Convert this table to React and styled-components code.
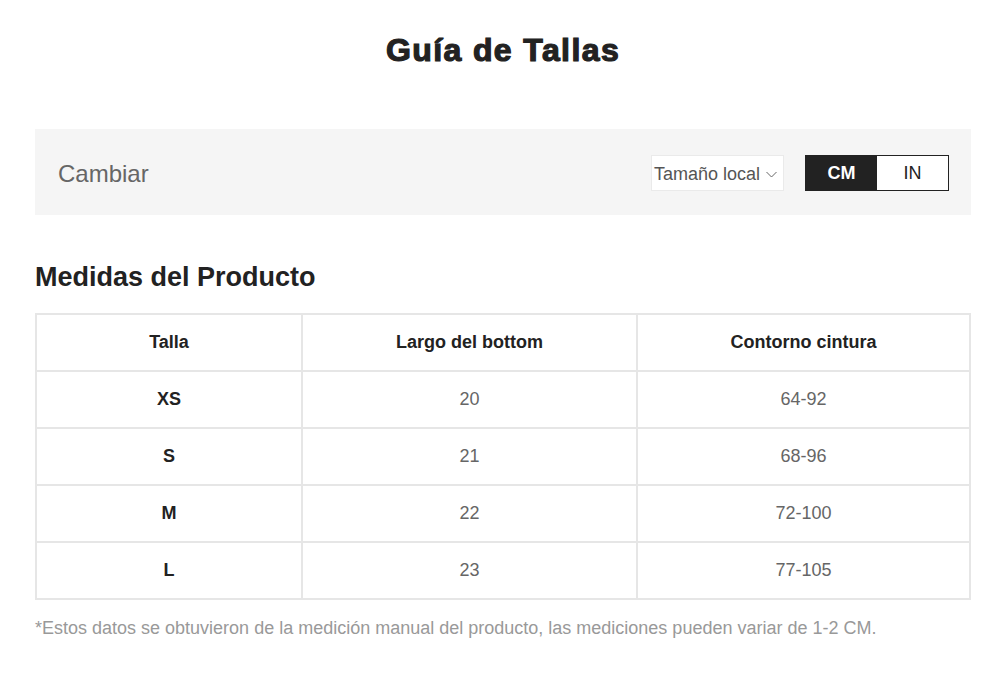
import React, { useState } from 'react';
import styled, { createGlobalStyle } from 'styled-components';

const GlobalStyle = createGlobalStyle`
    body {
        margin: 0;
        background: #fff;
        font-family: "Liberation Sans", Arial, sans-serif;
    }
`

const Page = styled.div`
    width: 936px;
    margin: 0 auto;
    padding-top: 32px;
`

const Title = styled.h1`
    margin: 0;
    text-align: center;
    font-size: 32px;
    font-weight: 700;
    color: #222;
    line-height: 36px;
    -webkit-text-stroke: 1.2px #222;
    letter-spacing: 1.4px;
`

const Toolbar = styled.div`
    margin-top: 61px;
    height: 86px;
    background: #f5f5f5;
    display: flex;
    align-items: center;
    padding: 0 22px 0 23px;
`

const Label = styled.span`
    flex: 1;
    font-size: 24px;
    color: #666;
    padding-top: 3px;
`

const Select = styled.div`
    height: 36px;
    box-sizing: border-box;
    width: 133px;
    background: #fff;
    border: 1px solid #eaeaea;
    display: flex;
    align-items: center;
    gap: 6px;
    padding: 3px 0 0 2px;
    font-size: 18px;
    color: #555;
    margin: 1px 21px 0 0;
`

const Toggle = styled.div`
    display: flex;
    border: 1px solid #222;
    height: 36px;
    box-sizing: border-box;
    margin-top: 1px;
`

const ToggleButton = styled.button`
    width: ${p => p.$w}px;
    border: none;
    margin: 0;
    padding: 2px 0 0;
    font-family: inherit;
    font-size: 18px;
    font-weight: ${p => p.$active ? 700 : 400};
    background: ${p => p.$active ? '#222' : '#fff'};
    color: ${p => p.$active ? '#fff' : '#222'};
    cursor: pointer;
`

const Heading = styled.h2`
    margin: 46px 0 0;
    font-size: 27px;
    font-weight: 700;
    color: #222;
    line-height: 32px;
`

const Table = styled.table`
    margin-top: 20px;
    width: 100%;
    border-collapse: collapse;
    border: 2px solid #e6e6e6;
`

const Cell = styled.td`
    border: 2px solid #e6e6e6;
    height: 55px;
    padding: 0;
    text-align: center;
    font-size: 18px;
    font-weight: ${p => p.$bold ? 700 : 400};
    color: ${p => p.$bold ? '#222' : '#666'};
`

const Note = styled.p`
    margin: 18px 0 0;
    font-size: 18px;
    color: #999;
`

const rows = [
    ['XS', '20', '64-92'],
    ['S', '21', '68-96'],
    ['M', '22', '72-100'],
    ['L', '23', '77-105'],
];

export default function App() {
    const [unit, setUnit] = useState('CM');

    return (
        <>
            <GlobalStyle />
            <Page>
                <Title>Guía de Tallas</Title>
                <Toolbar>
                    <Label>Cambiar</Label>
                    <Select>
                        Tamaño local
                        <svg width="11" height="7" viewBox="0 0 11 7" fill="none">
                            <path d="M0.5 1 L5.5 6 L10.5 1" stroke="#666" strokeWidth="1" />
                        </svg>
                    </Select>
                    <Toggle>
                        <ToggleButton $w={71} $active={unit === 'CM'} onClick={() => setUnit('CM')}>CM</ToggleButton>
                        <ToggleButton $w={71} $active={unit === 'IN'} onClick={() => setUnit('IN')}>IN</ToggleButton>
                    </Toggle>
                </Toolbar>
                <Heading>Medidas del Producto</Heading>
                <Table>
                    <colgroup>
                        <col style={{ width: '266px' }} />
                        <col style={{ width: '335px' }} />
                        <col />
                    </colgroup>
                    <tbody>
                        <tr>
                            <Cell $bold>Talla</Cell>
                            <Cell $bold>Largo del bottom</Cell>
                            <Cell $bold>Contorno cintura</Cell>
                        </tr>
                        {rows.map(r => (
                            <tr key={r[0]}>
                                <Cell $bold>{r[0]}</Cell>
                                <Cell>{r[1]}</Cell>
                                <Cell>{r[2]}</Cell>
                            </tr>
                        ))}
                    </tbody>
                </Table>
                <Note>*Estos datos se obtuvieron de la medición manual del producto, las mediciones pueden variar de 1-2 CM.</Note>
            </Page>
        </>
    )
}
